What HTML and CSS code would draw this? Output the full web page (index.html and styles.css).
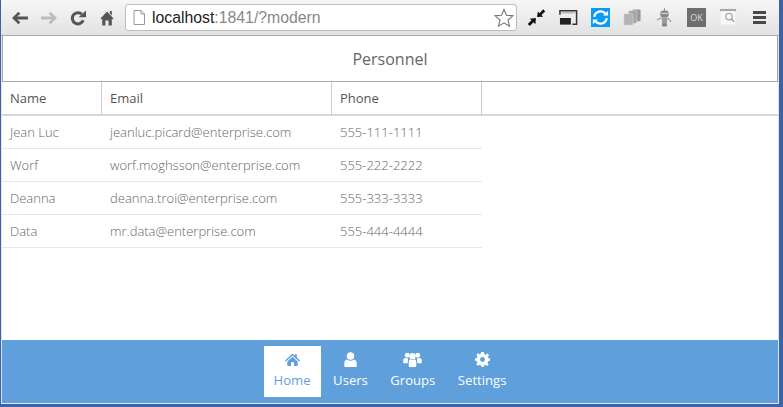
FILE: index.html
```html
<!DOCTYPE html>
<html lang="en">
<head>
    <meta charset="UTF-8">
    <title>Personnel</title>
    <link rel="stylesheet" href="styles.css">
</head>
<body>
<div class="window">
    <!-- Browser toolbar -->
    <div class="toolbar">
        <div class="nav-buttons">
            <svg class="nav-icon" viewBox="0 0 16 16"><path d="M0 8 L6.4 1.8 L8.4 3.8 L5.2 6.5 H16 V9.5 H5.2 L8.4 12.2 L6.4 14.2 Z" fill="#555"/></svg>
            <svg class="nav-icon" viewBox="0 0 16 16"><path d="M16 8 L9.6 1.8 L7.6 3.8 L10.8 6.5 H0 V9.5 H10.8 L7.6 12.2 L9.6 14.2 Z" fill="#bbb"/></svg>
            <svg class="nav-icon" viewBox="0 0 16 16"><path d="M13.2 10.2 A5.6 5.6 0 1 1 11.8 4.2" fill="none" stroke="#555" stroke-width="3"/><path d="M8.6 7.2 H16 V0.4 Z" fill="#555"/></svg>
            <svg class="nav-icon" viewBox="0 0 16 16"><path d="M8 1.5 L14.5 8.4 L13.4 9.4 L12.8 8.8 V15.5 H9.6 V10.5 H6.4 V15.5 H3.2 V8.8 L2.6 9.4 L1.5 8.4 Z M10.8 1 H12.8 V5.6 L10.8 3.4 Z" fill="#555"/></svg>
        </div>
        <div class="address-bar">
            <svg class="page-icon" viewBox="0 0 12 15"><path d="M1 .5 H8 L11.5 4 V14.5 H1 Z M8 .5 V4 H11.5" fill="#fff" stroke="#999"/></svg>
            <span class="url">localhost<span class="url-rest">:1841/?modern</span></span>
            <svg class="star-icon" viewBox="0 0 20 20"><path d="M10 1.5 L12.5 7.3 L18.8 7.8 L14 12 L15.5 18.2 L10 14.9 L4.5 18.2 L6 12 L1.2 7.8 L7.5 7.3 Z" fill="#fff" stroke="#777" stroke-width="1.1"/></svg>
        </div>
        <div class="extensions">
            <svg class="ext-icon" viewBox="0 0 20 20"><path d="M10.6 9.6 L11.4 3.6 L13.2 5.4 L17 1.4 L19.2 3.6 L15.2 7.4 L17 9.2 Z M9.4 10.6 L8.8 17 L6.8 15 L3 19 L.8 16.8 L4.8 13 L2.9 11.2 Z" fill="#111"/></svg>
            <svg class="ext-icon" viewBox="0 0 20 20"><path d="M1 7 V3 H18.5 V17 H14" fill="none" stroke="#333" stroke-width="1.6"/><path d="M3 5 H16.5" stroke="#bbb" stroke-width="1.6"/><path d="M1 10.5 H12.5 V17.5 H1 Z" fill="#222"/></svg>
            <svg class="ext-icon" viewBox="0 0 20 20"><rect width="20" height="20" fill="#0a9cf5"/><path d="M3.4 9.4 A6.8 6.8 0 0 1 15.4 6 M16.6 10.6 A6.8 6.8 0 0 1 4.6 14" fill="none" stroke="#fff" stroke-width="2.4"/><path d="M12.6 8 H18 V3 Z M7.4 12 H2 V17 Z" fill="#fff"/></svg>
            <svg class="ext-icon" viewBox="0 0 20 20"><rect x="10" y="1.5" width="8.5" height="12.5" rx="1" fill="#999"/><rect x="6" y="3" width="8.5" height="13" rx="1" fill="#a4a4a4" stroke="#d8d8d8" stroke-width=".6"/><rect x="1" y="6" width="9.5" height="12" rx="1" fill="#b3b3b3" stroke="#d8d8d8" stroke-width=".6"/></svg>
            <svg class="ext-icon" viewBox="0 0 20 20"><rect x="9.4" y="0" width="1.2" height="3" fill="#999"/><rect x="5.5" y="2.5" width="9" height="7.5" rx="3.5" fill="#868686"/><rect x="6" y="5" width="8" height="1.4" fill="#ccc"/><path d="M7 10 H13 L12.5 16 H7.5 Z" fill="#9c9c9c"/><path d="M6.6 10.6 L2 12.5 M13.4 10.6 L17 14.5" stroke="#aaa" stroke-width="1.6"/><rect x="7.5" y="16" width="5" height="3.4" fill="#808080"/></svg>
            <div class="ok-badge">OK</div>
            <svg class="ext-icon" viewBox="0 0 20 20"><rect x="1" y="1" width="17" height="2.4" fill="#a8a8a8"/><rect x="2" y="3.4" width="15" height="14" fill="#f7f7f7"/><circle cx="10.5" cy="9" r="3.4" fill="none" stroke="#aaa" stroke-width="1.4"/><path d="M13 11.5 L16 14.5" stroke="#999" stroke-width="1.5"/></svg>
            <div class="menu-icon"><span></span><span></span><span></span></div>
        </div>
    </div>

    <!-- Page -->
    <div class="page">
        <div class="page-title">Personnel</div>
        <div class="table-wrap">
            <div class="head-rule"></div>
            <table class="grid">
                <thead>
                    <tr><th class="col-name">Name</th><th class="col-email">Email</th><th class="col-phone">Phone</th></tr>
                </thead>
                <tbody>
                    <tr><td>Jean Luc</td><td>jeanluc.picard@enterprise.com</td><td>555-111-1111</td></tr>
                    <tr><td>Worf</td><td>worf.moghsson@enterprise.com</td><td>555-222-2222</td></tr>
                    <tr><td>Deanna</td><td>deanna.troi@enterprise.com</td><td>555-333-3333</td></tr>
                    <tr><td>Data</td><td>mr.data@enterprise.com</td><td>555-444-4444</td></tr>
                </tbody>
            </table>
        </div>
        <div class="tabbar">
            <a class="tab active">
                <svg class="tab-icon" viewBox="0 0 16 14"><path d="M8 .5 L10.6 2.9 V1.3 H12.6 V4.8 L16 8 L15 9 L8 2.6 L1 9 L0 8 Z M8 4 L13.5 9 V14 H9.6 V10 H6.4 V14 H2.5 V9 Z"/></svg>
                Home
            </a>
            <a class="tab">
                <svg class="tab-icon" viewBox="0 0 16 16"><circle cx="8" cy="4.2" r="4"/><path d="M2 16 Q1.4 16 1.4 15 V12 Q1.4 8.6 4.4 8 Q8 10.6 11.6 8 Q14.6 8.6 14.6 12 V15 Q14.6 16 14 16 Z"/></svg>
                Users
            </a>
            <a class="tab">
                <svg class="tab-icon tab-icon-wide" viewBox="0 0 20 16"><circle cx="4.4" cy="3.4" r="2.6"/><circle cx="15.6" cy="3.4" r="2.6"/><circle cx="10" cy="4.4" r="3.4"/><path d="M0 10 Q0 6.6 2.4 6.4 L5.4 7 Q5 8 5 10 L5 12 H1 Q0 12 0 11 Z M20 10 Q20 6.6 17.6 6.4 L14.6 7 Q15 8 15 10 L15 12 H19 Q20 12 20 11 Z M6 11 Q6 8 7.8 7.8 Q10 9.4 12.2 7.8 Q14 8 14 11 V15 Q14 16 13 16 H7 Q6 16 6 15 Z"/></svg>
                Groups
            </a>
            <a class="tab">
                <svg class="tab-icon" viewBox="0 0 16 16"><path fill-rule="evenodd" d="M6.6 0 H9.4 L9.9 2.2 L11.4 2.8 L13.3 1.6 L15 3.4 L13.7 5.2 L14.3 6.6 L16 7 V9.4 L14 9.9 L13.4 11.4 L14.5 13.2 L12.8 15 L11 13.7 L9.6 14.3 L9.2 16 H6.8 L6.3 14.2 L4.9 13.6 L3.1 14.7 L1.3 13 L2.5 11.2 L1.9 9.7 L0 9.2 V6.8 L1.9 6.3 L2.5 4.8 L1.4 3.1 L3.1 1.4 L4.9 2.5 L6.2 1.9 Z M8 5.4 A2.6 2.6 0 1 0 8 10.6 A2.6 2.6 0 1 0 8 5.4 Z"/></svg>
                Settings
            </a>
        </div>
    </div>
</div>
</body>
</html>
```

FILE: styles.css
```css
/* General Styles */
body {
    margin: 0;
    background-color: #3c62aa;
    font-family: "Open Sans", Arial, sans-serif;
    overflow: hidden;
}

.window {
    height: 404px;
    margin: 0 4px 0 1px;
    display: flex;
    flex-direction: column;
}

/* Browser toolbar */
.toolbar {
    height: 35px;
    flex: none;
    display: flex;
    align-items: center;
    background: linear-gradient(#f6f6f6, #e2e2e2);
    border-bottom: 1px solid #a9a9a9;
}

.nav-buttons {
    display: flex;
    gap: 13px;
    margin-left: 11px;
    width: 113px;
}

.nav-icon {
    width: 16px;
    height: 16px;
}

.address-bar {
    width: 392px;
    height: 27px;
    box-sizing: border-box;
    display: flex;
    align-items: center;
    background-color: #fff;
    border: 1px solid #bdbdbd;
    border-radius: 3px;
}

.page-icon {
    width: 12px;
    height: 15px;
    margin: 0 7px;
}

.url {
    font-family: "Liberation Sans", Arial, sans-serif;
    font-size: 15.8px;
    color: #222;
    flex: 1;
}

.url-rest {
    color: #888;
}

.star-icon {
    width: 20px;
    height: 20px;
    margin-right: 2px;
}

.extensions {
    display: flex;
    align-items: center;
    gap: 13px;
    margin-left: 10px;
}

.ext-icon {
    width: 19px;
    height: 19px;
    display: block;
}

.ok-badge {
    width: 19px;
    height: 19px;
    background-color: #6e6e6e;
    color: #ddd;
    font-size: 9px;
    line-height: 19px;
    text-align: center;
}

.menu-icon {
    display: flex;
    flex-direction: column;
    gap: 2px;
    width: 13px;
    margin-left: 2px;
}

.menu-icon span {
    height: 3px;
    background-color: #484848;
}

/* Page */
.page {
    flex: 1;
    display: flex;
    flex-direction: column;
    background-color: #fff;
    min-height: 0;
    border: 1px solid #dfe3ea;
    border-top: none;
}

.page-title {
    height: 45px;
    line-height: 46px;
    border: 1px solid #aaa;
    border-top: none;
    text-align: center;
    font-size: 16px;
    color: #666;
}

.table-wrap {
    flex: 1;
    position: relative;
}

/* the header line runs past the table, right across the page */
.head-rule {
    position: absolute;
    top: 32px;
    left: 0;
    right: 0;
    height: 2px;
    background-color: #d6d6d6;
}

.grid {
    position: relative;
    border-collapse: separate;
    border-spacing: 0;
    table-layout: fixed;
    width: 480px;
    font-size: 13px;
}

.grid th {
    box-sizing: border-box;
    height: 34px;
    padding: 0 8px;
    text-align: left;
    font-weight: 400;
    color: #555;
    border-right: 1px solid #ccc;
    border-bottom: 2px solid #d6d6d6;
}

.grid td {
    box-sizing: border-box;
    height: 33px;
    padding: 0 8px;
    font-weight: 300;
    color: #666;
    border-bottom: 1px solid #e8e8e8;
}

.col-name {
    width: 100px;
}

.col-email {
    width: 230px;
}

.col-phone {
    width: 150px;
}

/* Tab bar */
.tabbar {
    height: 63px;
    flex: none;
    display: flex;
    justify-content: center;
    align-items: center;
    gap: 2.5px;
    background-color: #5e9fdc;
}

.tab {
    height: 51px;
    padding: 0 10px;
    display: flex;
    flex-direction: column;
    align-items: center;
    justify-content: center;
    gap: 5px;
    color: #fff;
    font-size: 13.1px;
    line-height: 16px;
}

.tab.active {
    background-color: #fff;
    color: #5e9fdc;
}

.tab-icon {
    width: 15px;
    height: 15px;
    fill: currentColor;
    margin-top: -3px;
}

.tab-icon-wide {
    width: 19px;
}
```
